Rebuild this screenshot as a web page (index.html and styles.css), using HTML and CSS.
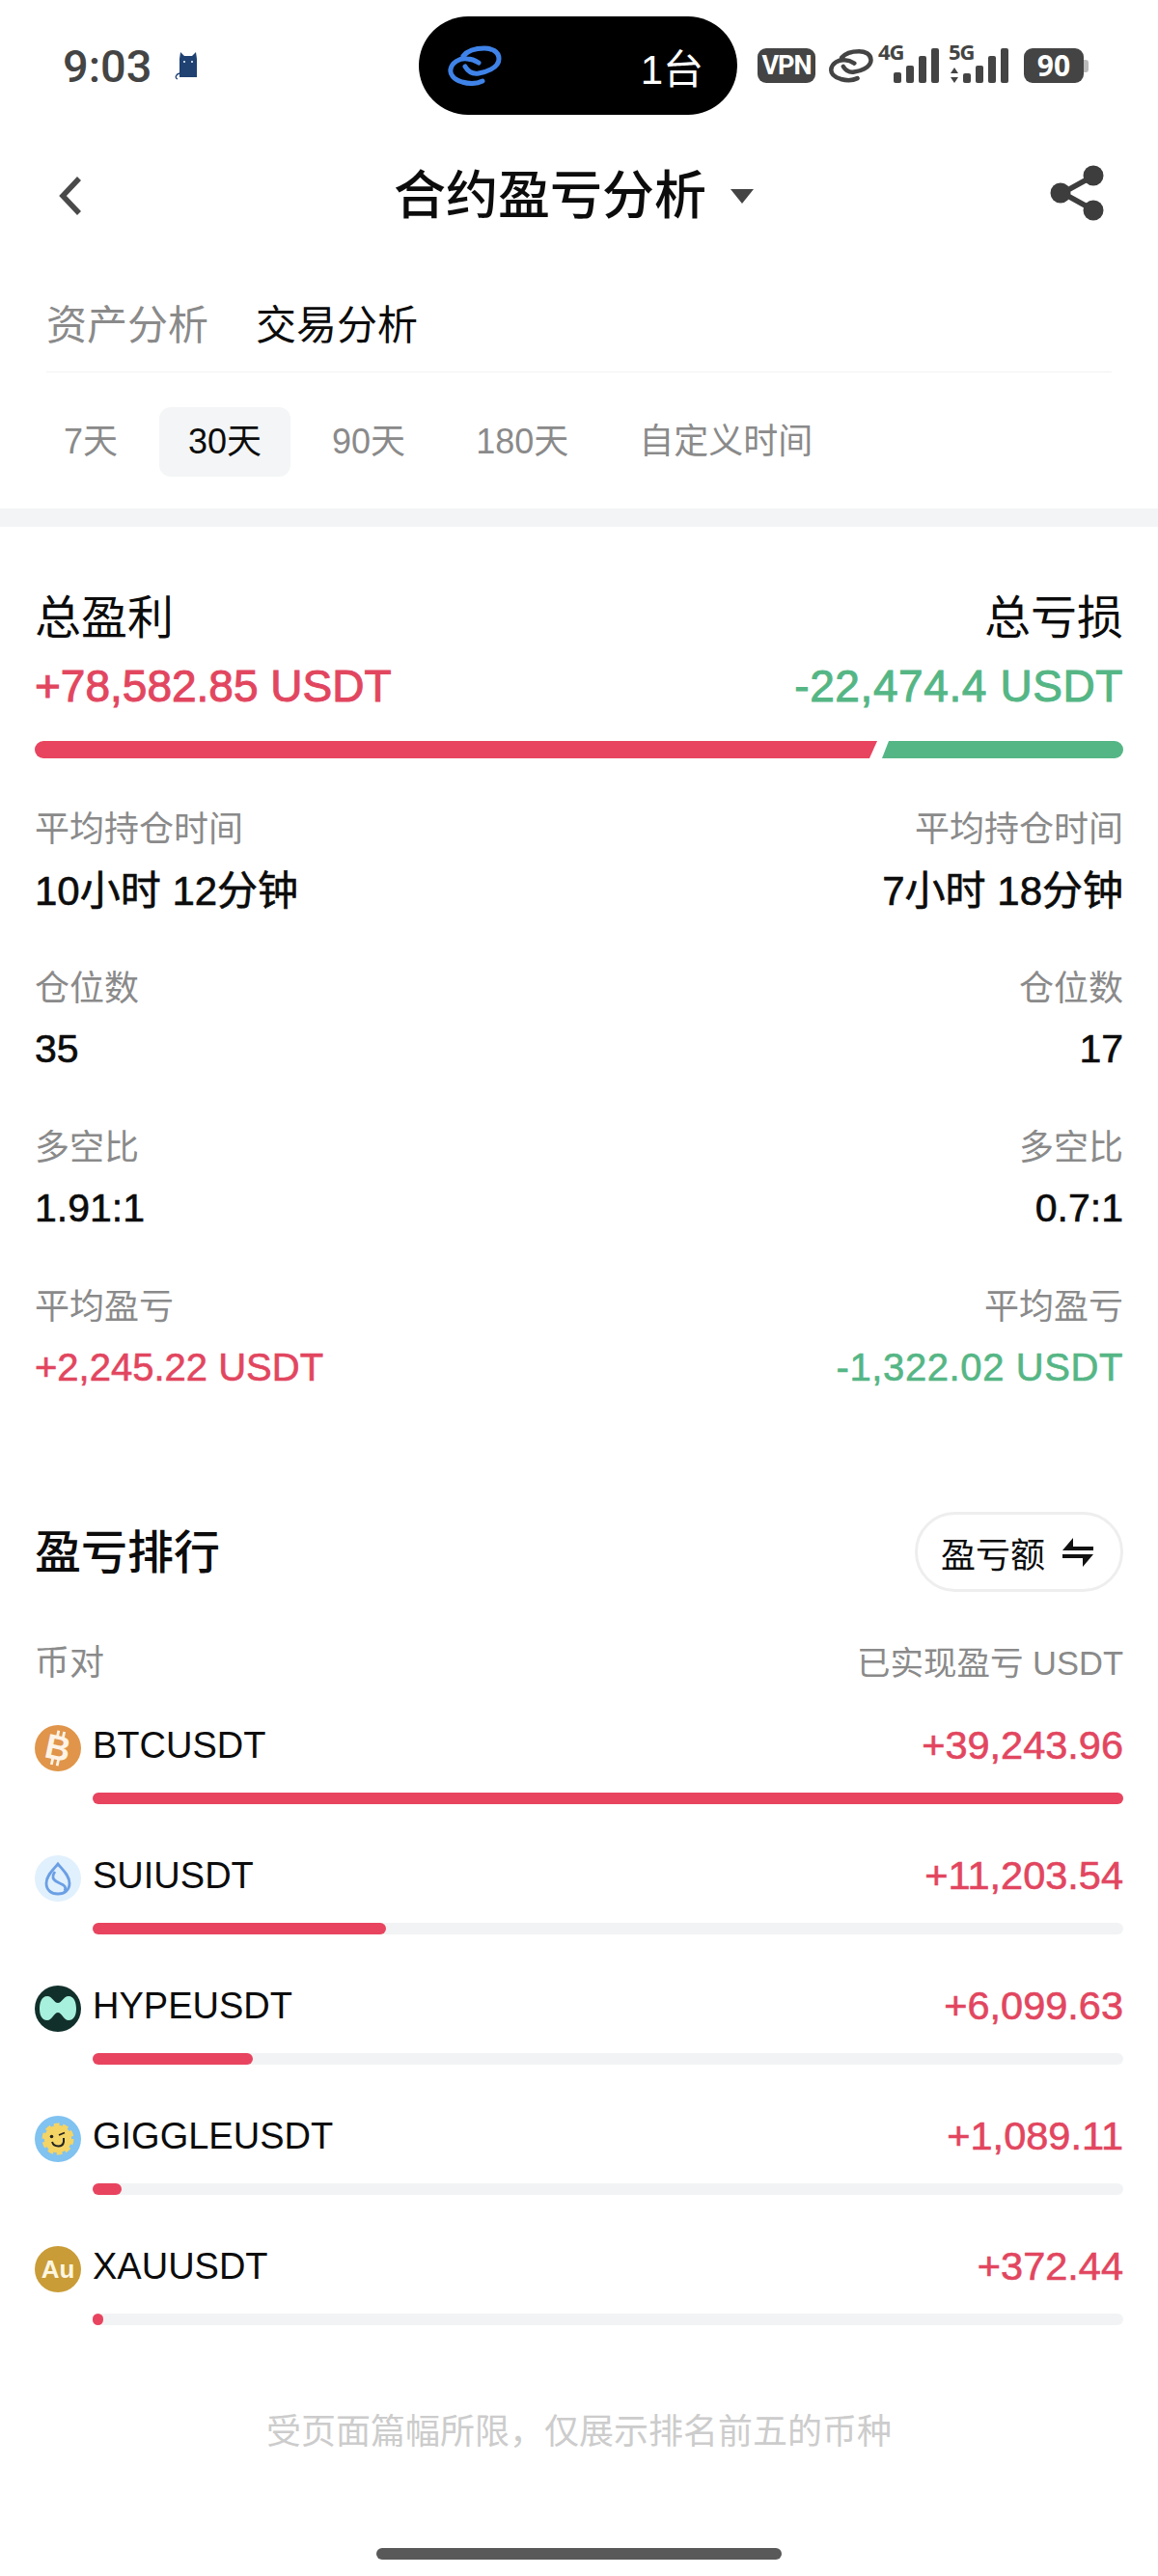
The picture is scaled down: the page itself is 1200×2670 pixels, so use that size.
FILE: index.html
```html
<!DOCTYPE html>
<html lang="zh-CN">
  <head>
    <meta charset="UTF-8" />
    <meta name="viewport" content="width=device-width, initial-scale=1.0" />
    <title>合约盈亏分析</title>
    <link rel="stylesheet" href="styles.css">
  </head>

  <body>
    <div class="page">
      <!-- status bar -->
      <div class="status">
        <div class="status-left">
          <span class="clock">9:03</span>
          <svg class="cat" viewBox="0 0 26 30">
            <path d="M5 27V8L6 1L10 5H18L22 1L23 8V27Z" fill="#1f4273"/>
            <path d="M5 23C1 24 0 28 3 29" fill="none" stroke="#1f4273" stroke-width="1.3"/>
            <circle cx="10" cy="11" r="1" fill="#fff"/>
            <circle cx="18" cy="11" r="1" fill="#fff"/>
          </svg>
        </div>
        <div class="island">
          <svg class="island-link" viewBox="0 0 56 42">
            <g fill="none" stroke="#3f83e8" stroke-width="5" stroke-linecap="round">
              <path d="M36 37C30 40 22 40 15 38C6 35 2 30 3 25C4 18 12 13 20 14C25 14 29 16 32 18"/>
              <path d="M18 22C21 27 26 30 32 29C38 28 53 24 53 14C53 6 45 3 38 3C30 3 21 5 16 11"/>
            </g>
          </svg>
          <span class="island-text">1台</span>
        </div>
        <div class="status-right">
          <span class="vpn">VPN</span>
          <svg class="sys-link" viewBox="0 0 56 42">
            <g fill="none" stroke="#444" stroke-width="5.5" stroke-linecap="round">
              <path d="M36 37C30 40 22 40 15 38C6 35 2 30 3 25C4 18 12 13 20 14C25 14 29 16 32 18"/>
              <path d="M18 22C21 27 26 30 32 29C38 28 53 24 53 14C53 6 45 3 38 3C30 3 21 5 16 11"/>
            </g>
          </svg>
          <svg class="signal" viewBox="0 -8 63 49">
            <text class="net-label" x="0" y="17">4G</text>
            <rect x="16" y="30" width="8" height="11" rx="2" fill="#444"/>
            <rect x="29" y="23" width="8" height="18" rx="2" fill="#444"/>
            <rect x="42" y="13" width="8" height="28" rx="2" fill="#444"/>
            <rect x="55" y="5" width="8" height="36" rx="2" fill="#444"/>
          </svg>
          <svg class="signal" viewBox="0 -8 62 49">
            <text class="net-label" x="0" y="17">5G</text>
            <path d="M6 25L10 31H2ZM6 41L10 35H2Z" fill="#444"/>
            <rect x="15" y="31" width="8" height="10" rx="2" fill="#444"/>
            <rect x="28" y="23" width="8" height="18" rx="2" fill="#444"/>
            <rect x="41" y="13" width="8" height="28" rx="2" fill="#444"/>
            <rect x="54" y="5" width="8" height="36" rx="2" fill="#444"/>
          </svg>
          <span class="battery">90</span>
        </div>
      </div>

      <!-- nav -->
      <div class="nav">
        <svg class="back" viewBox="0 0 26 42">
          <path d="M22 3L5 21L22 39" fill="none" stroke="#4a4a4a" stroke-width="5.5"/>
        </svg>
        <div class="nav-title">
          <h1>合约盈亏分析</h1>
          <span class="caret"></span>
        </div>
        <svg class="share" viewBox="0 0 56 58">
          <path d="M42 13L13 29L42 45" fill="none" stroke="#3d3d3d" stroke-width="5.5"/>
          <circle cx="45" cy="11" r="10.5" fill="#3d3d3d"/>
          <circle cx="11" cy="29" r="10.5" fill="#3d3d3d"/>
          <circle cx="45" cy="47" r="10.5" fill="#3d3d3d"/>
        </svg>
      </div>

      <div class="tabs">
        <span class="tab">资产分析</span>
        <span class="tab tab-active">交易分析</span>
      </div>

      <div class="periods">
        <span class="period">7天</span>
        <span class="period period-active">30天</span>
        <span class="period">90天</span>
        <span class="period">180天</span>
        <span class="period">自定义时间</span>
      </div>

      <div class="band"></div>

      <!-- summary -->
      <div class="summary">
        <div class="between">
          <span class="total-label">总盈利</span>
          <span class="total-label">总亏损</span>
        </div>
        <div class="between total-values">
          <span class="total-value up">+78,582.85 USDT</span>
          <span class="total-value down">-22,474.4 USDT</span>
        </div>
        <div class="ratio">
          <div class="ratio-up"></div>
          <div class="ratio-down"></div>
        </div>

        <div class="stats">
          <div class="stat-row">
            <div class="stat">
              <div class="stat-label">平均持仓时间</div>
              <div class="stat-value stat-time">10小时 12分钟</div>
            </div>
            <div class="stat stat-right">
              <div class="stat-label">平均持仓时间</div>
              <div class="stat-value stat-time">7小时 18分钟</div>
            </div>
          </div>
          <div class="stat-row">
            <div class="stat">
              <div class="stat-label">仓位数</div>
              <div class="stat-value">35</div>
            </div>
            <div class="stat stat-right">
              <div class="stat-label">仓位数</div>
              <div class="stat-value">17</div>
            </div>
          </div>
          <div class="stat-row">
            <div class="stat">
              <div class="stat-label">多空比</div>
              <div class="stat-value">1.91:1</div>
            </div>
            <div class="stat stat-right">
              <div class="stat-label">多空比</div>
              <div class="stat-value">0.7:1</div>
            </div>
          </div>
          <div class="stat-row">
            <div class="stat">
              <div class="stat-label">平均盈亏</div>
              <div class="stat-value stat-money up">+2,245.22 USDT</div>
            </div>
            <div class="stat stat-right">
              <div class="stat-label">平均盈亏</div>
              <div class="stat-value stat-money down">-1,322.02 USDT</div>
            </div>
          </div>
        </div>
      </div>

      <!-- ranking -->
      <div class="rank">
        <div class="between rank-head">
          <h2>盈亏排行</h2>
          <div class="rank-btn">
            <span>盈亏额</span>
            <svg class="swap" viewBox="0 0 32 30">
              <path d="M11 0V9H32V13H0Z" fill="#111"/>
              <path d="M21 30V21H0V17H32Z" fill="#111"/>
            </svg>
          </div>
        </div>
        <div class="between rank-cols">
          <span>币对</span>
          <span class="rank-col-right">已实现盈亏 USDT</span>
        </div>

        <div class="coin">
          <svg class="coin-icon" viewBox="0 0 48 48">
            <circle cx="24" cy="24" r="24" fill="#e0954a"/>
            <g transform="rotate(12 24 24)">
              <text class="coin-b" x="24" y="36" text-anchor="middle">B</text>
              <path d="M21 6V12M27 6V12M21 35V42M27 35V42" stroke="#fdf3e6" stroke-width="2.8"/>
            </g>
          </svg>
          <div class="between coin-line">
            <span class="coin-name">BTCUSDT</span>
            <span class="coin-value">+39,243.96</span>
          </div>
          <div class="coin-track"><div class="coin-fill" style="width: 100%"></div></div>
        </div>

        <div class="coin">
          <svg class="coin-icon" viewBox="0 0 48 48">
            <circle cx="24" cy="24" r="24" fill="#e1f0fd"/>
            <path d="M24 9C29 15 36 21 36 29C36 36 31 40 24 40C17 40 12 36 12 29C12 21 19 15 24 9Z" fill="none" stroke="#6b9fe4" stroke-width="2.8"/>
            <path d="M21 17C16 24 21 27 26 29C31 31 33 33 31 37" fill="none" stroke="#6b9fe4" stroke-width="2.8"/>
          </svg>
          <div class="between coin-line">
            <span class="coin-name">SUIUSDT</span>
            <span class="coin-value">+11,203.54</span>
          </div>
          <div class="coin-track"><div class="coin-fill" style="width: 28.5%"></div></div>
        </div>

        <div class="coin">
          <svg class="coin-icon" viewBox="0 0 48 48">
            <circle cx="24" cy="24" r="24" fill="#12302b"/>
            <path d="M13 11C18 11 20 18 24 18C28 18 30 11 35 11C41 11 43 18 43 24C43 30 41 36 35 36C30 36 28 28 24 28C20 28 18 36 13 36C7 36 5 30 5 24C5 18 7 11 13 11Z" fill="#a6f0dd"/>
          </svg>
          <div class="between coin-line">
            <span class="coin-name">HYPEUSDT</span>
            <span class="coin-value">+6,099.63</span>
          </div>
          <div class="coin-track"><div class="coin-fill" style="width: 15.5%"></div></div>
        </div>

        <div class="coin">
          <svg class="coin-icon" viewBox="0 0 48 48">
            <circle cx="24" cy="24" r="24" fill="#80c2f0"/>
            <circle cx="24" cy="24" r="14" fill="#f4d465" stroke="#f4d465" stroke-width="5" stroke-dasharray="5.5 3.3"/>
            <circle cx="24" cy="24" r="14" fill="#f4d465"/>
            <circle cx="17.5" cy="21.5" r="1.8" fill="#222"/>
            <path d="M25 20L31 17.5" stroke="#222" stroke-width="1.8"/>
            <path d="M18 27C20 33 29 33 30 27V23" fill="none" stroke="#222" stroke-width="2"/>
          </svg>
          <div class="between coin-line">
            <span class="coin-name">GIGGLEUSDT</span>
            <span class="coin-value">+1,089.11</span>
          </div>
          <div class="coin-track"><div class="coin-fill" style="width: 2.8%"></div></div>
        </div>

        <div class="coin">
          <div class="coin-icon coin-au">Au</div>
          <div class="between coin-line">
            <span class="coin-name">XAUUSDT</span>
            <span class="coin-value">+372.44</span>
          </div>
          <div class="coin-track"><div class="coin-fill" style="width: 1%"></div></div>
        </div>
      </div>

      <div class="note">受页面篇幅所限，仅展示排名前五的币种</div>
      <div class="home-bar"></div>
    </div>
  </body>
</html>
```

FILE: styles.css
```css
body {
  margin: 0;
  background: #ffffff;
  color: #0c0c0c;
  font-family: "Liberation Sans", "Noto Sans CJK SC", sans-serif;
}

h1,
h2 {
  margin: 0;
}

.page {
  width: 1200px;
  height: 2670px;
  overflow: hidden;
}

.between {
  display: flex;
  justify-content: space-between;
  align-items: center;
}

.up {
  color: #e2465f;
}

.down {
  color: #55b685;
  letter-spacing: 0.6px;
}

/* status bar */
.status {
  display: grid;
  grid-template-columns: 369px 330px 1fr;
  height: 136px;
  padding: 17px 0 0 65px;
  box-sizing: border-box;
}

.status-left {
  display: flex;
  align-items: center;
  height: 102px;
}

.clock {
  font-family: Roboto, sans-serif;
  font-size: 47px;
  font-weight: 500;
  color: #444444;
}

.cat {
  width: 26px;
  height: 30px;
  margin-left: 23px;
}

.island {
  display: flex;
  justify-content: space-between;
  align-items: center;
  height: 102px;
  padding: 0 35px 0 30px;
  box-sizing: border-box;
  background: #000000;
  border-radius: 51px;
}

.island-link {
  width: 56px;
  height: 42px;
}

.island-text {
  color: #ffffff;
  font-size: 42px;
}

.status-right {
  display: flex;
  align-items: center;
  height: 102px;
  padding-left: 21px;
}

.vpn {
  width: 60px;
  height: 36px;
  line-height: 36px;
  text-align: center;
  background: #444444;
  border-radius: 9px;
  color: #ffffff;
  font-family: Roboto, sans-serif;
  font-size: 27px;
  font-weight: 700;
  letter-spacing: -1px;
}

.sys-link {
  width: 46px;
  height: 36px;
  margin-left: 14px;
}

.signal {
  width: 63px;
  height: 49px;
  margin-top: -13px;
  margin-left: 5px;
}

.signal + .signal {
  width: 62px;
  margin-left: 10px;
}

.net-label {
  font-family: "Open Sans", sans-serif;
  font-size: 22px;
  font-weight: 700;
  letter-spacing: -1px;
  fill: #444444;
}

.battery {
  position: relative;
  width: 62px;
  height: 36px;
  margin-left: 16px;
  line-height: 36px;
  text-align: center;
  background: #444444;
  border-radius: 9px;
  color: #ffffff;
  font-family: "Open Sans", sans-serif;
  font-size: 30px;
  font-weight: 700;
}

/* battery tip */
.battery::after {
  content: "";
  position: absolute;
  top: 12px;
  right: -5px;
  width: 5px;
  height: 13px;
  background: #bbbbbb;
  border-radius: 0 3px 3px 0;
}

/* nav */
.nav {
  display: grid;
  grid-template-columns: 1fr auto 1fr;
  align-items: center;
  height: 128px;
  padding: 0 56px 0 60px;
  box-sizing: border-box;
}

.back {
  width: 26px;
  height: 42px;
  margin-top: 6px;
}

.nav-title {
  display: flex;
  align-items: center;
  margin-top: 6px;
  margin-right: 15px;
}

.nav-title h1 {
  font-size: 54px;
  font-weight: 500;
  line-height: 64px;
}

.caret {
  width: 0;
  height: 0;
  margin-left: 25px;
  border-left: 12px solid transparent;
  border-right: 12px solid transparent;
  border-top: 15px solid #444444;
}

.share {
  justify-self: end;
  width: 56px;
  height: 58px;
}

/* tabs */
.tabs {
  display: flex;
  gap: 49px;
  margin: 0 48px;
  padding: 46px 0 19px;
  border-bottom: 1px solid #f2f2f2;
}

.tab {
  font-size: 42px;
  line-height: 56px;
  color: #8a8a8a;
}

.tab-active {
  color: #0c0c0c;
}

.periods {
  display: flex;
  gap: 13px;
  padding: 36px 0 33px 36px;
}

.period {
  height: 72px;
  padding: 0 30px;
  line-height: 72px;
  font-size: 36px;
  color: #8a8a8a;
  border-radius: 12px;
}

.period-active {
  background: #f3f5f6;
  color: #0c0c0c;
}

.band {
  height: 19px;
  background: #f3f4f5;
}

/* summary */
.summary {
  padding: 65px 36px 0;
}

.total-label {
  font-size: 48px;
  line-height: 60px;
}

.total-values {
  margin-top: 12px;
}

.total-value {
  font-size: 46px;
  line-height: 56px;
  -webkit-text-stroke: 1px;
}

.ratio {
  display: flex;
  gap: 5px;
  height: 18px;
  margin-top: 29px;
}

.ratio-up {
  width: 873px;
  background: #e8445f;
  border-radius: 9px 0 0 9px;
  clip-path: polygon(0 0, 100% 0, calc(100% - 8px) 100%, 0 100%);
}

.ratio-down {
  flex: 1;
  background: #55b685;
  border-radius: 0 9px 9px 0;
  clip-path: polygon(7px 0, 100% 0, 100% 100%, 0 100%);
}

.stats {
  display: flex;
  flex-direction: column;
  gap: 51px;
  margin-top: 47px;
}

.stat-row {
  display: flex;
  justify-content: space-between;
}

.stat-right {
  text-align: right;
}

.stat-label {
  padding-top: 2px;
  font-size: 36px;
  line-height: 50px;
  color: #8a8a8a;
}

.stat-value {
  margin-top: 12px;
  font-size: 41px;
  line-height: 50px;
  -webkit-text-stroke: 0.6px;
}

.stat-time {
  margin-top: 14px;
  margin-bottom: -2px;
  font-size: 42px;
}

.stat-money {
  font-size: 40px;
}

/* ranking */
.rank {
  padding: 125px 36px 0;
}

.rank-head {
  height: 83px;
}

.rank-head h2 {
  padding-bottom: 7px;
  font-size: 48px;
  font-weight: 500;
}

.rank-btn {
  display: flex;
  align-items: center;
  gap: 18px;
  height: 83px;
  padding: 0 28px 0 24px;
  box-sizing: border-box;
  border: 3px solid #eeeeee;
  border-radius: 42px;
  font-size: 36px;
}

.swap {
  width: 32px;
  height: 30px;
}

.rank-cols {
  margin-top: 48px;
  font-size: 36px;
  line-height: 52px;
  color: #8a8a8a;
}

.rank-col-right {
  font-size: 34.5px;
}

.coin {
  display: grid;
  grid-template-columns: 60px 1fr;
  margin-top: 34px;
}

.coin + .coin {
  margin-top: 49px;
}

.coin-icon {
  width: 48px;
  height: 48px;
  margin: 4px 0 -2px;
}

.coin-line {
  height: 50px;
}

.coin-name {
  font-size: 38px;
}

.coin-value {
  font-size: 41.5px;
  color: #e2465f;
  -webkit-text-stroke: 0.6px;
}

.coin-track {
  grid-column: 2;
  height: 12px;
  margin-top: 24px;
  background: #f2f3f4;
  border-radius: 6px;
}

.coin-fill {
  height: 12px;
  min-width: 10px;
  background: #e8445f;
  border-radius: 6px;
}

.coin-b {
  font-size: 36px;
  font-weight: 700;
  fill: #fdf3e6;
}

.coin-au {
  line-height: 48px;
  text-align: center;
  background: #c99c38;
  border-radius: 50%;
  color: #fdf6e0;
  font-size: 26px;
  font-weight: 700;
}

.note {
  margin-top: 86px;
  font-size: 36px;
  line-height: 50px;
  text-align: center;
  color: #cccccc;
}

.home-bar {
  width: 420px;
  height: 12px;
  margin: 95px auto 0;
  background: #595959;
  border-radius: 6px;
}
```
